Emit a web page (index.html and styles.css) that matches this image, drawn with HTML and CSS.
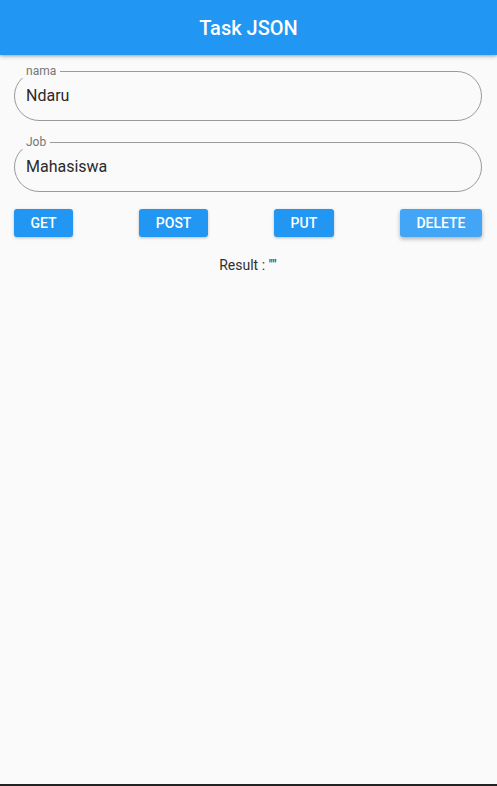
FILE: index.html
```html
<!DOCTYPE html>
<html>
<head>
<meta charset="utf-8">
<link rel="stylesheet" href="styles.css">
</head>
<body>
<div class="screen">
  <header class="appbar"><h1 class="title">Task JSON</h1></header>
  <main class="content">
    <div class="field">
      <span class="label">nama</span>
      <div class="value">Ndaru</div>
    </div>
    <div class="field">
      <span class="label">Job</span>
      <div class="value">Mahasiswa</div>
    </div>
    <div class="buttons">
      <button class="btn">GET</button>
      <button class="btn">POST</button>
      <button class="btn">PUT</button>
      <button class="btn btn-hover">DELETE</button>
    </div>
    <p class="result">Result : ""</p>
  </main>
  <div class="bottom-bar"></div>
</div>
</body>
</html>
```

FILE: styles.css
```css
html, body {
  margin: 0;
  padding: 0;
}
body {
  background: #fafafa;
  font-family: Roboto, "Liberation Sans", sans-serif;
}
.screen {
  height: 786px;
  display: flex;
  flex-direction: column;
  overflow: hidden;
}
.appbar {
  height: 55px;
  background: #2196f3;
  display: flex;
  align-items: center;
  justify-content: center;
  box-shadow: 0 2px 4px rgba(0,0,0,0.2), 0 1px 2px rgba(0,0,0,0.14);
  position: relative;
  z-index: 1;
  flex-shrink: 0;
}
.title {
  margin: 0;
  color: #fff;
  font-size: 20px;
  font-weight: 500;
}
.content {
  flex: 1;
  padding: 16px 15px 0 14px;
  display: flex;
  flex-direction: column;
}
.field {
  position: relative;
  height: 48px;
  border: 1px solid #9a9a9a;
  border-radius: 25px;
  display: flex;
  align-items: center;
  padding-left: 11px;
  margin-bottom: 21px;
}
.label {
  position: absolute;
  left: 7px;
  top: -8px;
  padding: 0 4px;
  background: #fafafa;
  font-size: 12px;
  line-height: 14px;
  color: #757575;
}
.value {
  font-size: 16px;
  color: #2a2a2a;
  margin-top: -2px;
}
.buttons {
  display: flex;
  justify-content: space-between;
  margin-top: -4px;
}
.btn {
  height: 28px;
  padding: 0 16.5px;
  border: none;
  border-radius: 3px;
  background: #2196f3;
  color: #fff;
  font-family: Roboto, "Liberation Sans", sans-serif;
  font-size: 14px;
  font-weight: 500;
  box-shadow: 0 1px 3px rgba(0,0,0,0.25);
}
.btn-hover {
  background: #42a5f5;
  box-shadow: 0 2px 4px rgba(0,0,0,0.3);
}
.result {
  margin: 20px 0 0;
  text-align: center;
  font-size: 14px;
  color: #303030;
}
.bottom-bar {
  height: 2px;
  background: #222;
  flex-shrink: 0;
}
```
